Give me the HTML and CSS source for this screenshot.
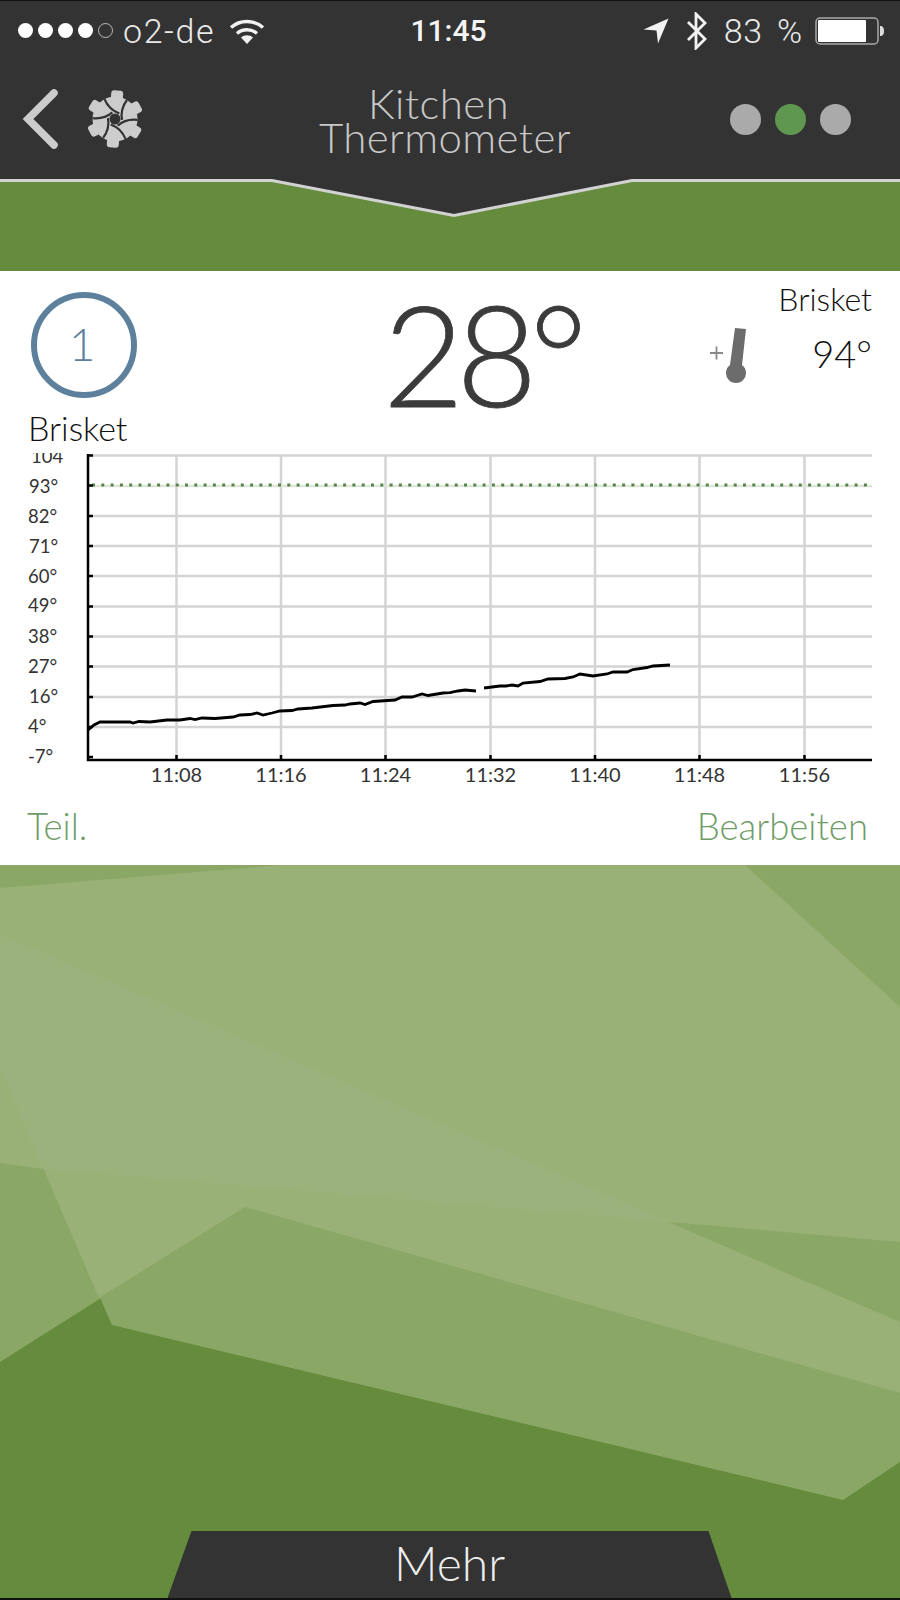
FILE: index.html
```html
<!DOCTYPE html>
<html>
<head>
  <meta charset="UTF-8">
  <title>Kitchen Thermometer</title>
  <link rel="stylesheet" href="styles.css">
</head>
<body>
  <div class="phone">
    <header class="header">
      <div class="status">
        <div class="status-left">
          <span class="signal"><i></i><i></i><i></i><i></i><i class="off"></i></span>
          <span class="carrier">o2-de</span>
          <svg class="wifi" width="36" height="26" viewBox="0 0 36 26">
            <path d="M2 9.5C11 1.5 25 1.5 34 9.5M8 15.5C13.5 10.5 22.500 10.500 28 15.500" fill="none" stroke="#f2f2f2" stroke-width="3.400"/>
            <path d="M12 19.500C15.500 16.500 20.500 16.500 24 19.500L18 26Z" fill="#f2f2f2"/>
          </svg>
        </div>
        <div class="clock">11:45</div>
        <div class="status-right">
          <svg class="arrow" width="26" height="26" viewBox="0 0 26 26"><path d="M25.500 0.500L0.500 11.500L13.500 12.500L15 25.500Z" fill="#f2f2f2"/></svg>
          <svg class="bt" width="24" height="38" viewBox="0 0 24 38"><path d="M3 10L20 27L11 36V2L20 11L3 28" fill="none" stroke="#f2f2f2" stroke-width="2.800"/></svg>
          <span class="battery-text">83 %</span>
          <svg class="battery" width="70" height="28" viewBox="0 0 70 28">
            <rect x="1" y="1" width="62" height="26" rx="4" fill="none" stroke="#aaa" stroke-width="1.500"/>
            <rect x="3" y="3" width="48" height="22" rx="1" fill="#fff"/>
            <path d="M65 9c3 0 4 2 4 5s-1 5-4 5z" fill="#ddd"/>
          </svg>
        </div>
      </div>
      <nav class="nav">
        <div class="nav-left">
          <svg class="back" width="38" height="60" viewBox="0 0 38 60"><path d="M34 4L8 30L34 56" fill="none" stroke="#ccc" stroke-width="7.500" stroke-linecap="round"/></svg>
          <svg class="gear" width="60" height="60" viewBox="0 0 60 60">
            <defs>
              <rect id="tooth" x="24" y="1.500" width="12" height="14" rx="3" fill="#ccc"/>
              <path id="slit" d="M35 25C29 22 24 16 22 9" fill="none" stroke="#333" stroke-width="2.200"/>
            </defs>
            <circle cx="30" cy="30" r="22.500" fill="#ccc"/>
            <use href="#tooth" transform="rotate(5 30 30)"/>
            <use href="#tooth" transform="rotate(62 30 30)"/>
            <use href="#tooth" transform="rotate(122 30 30)"/>
            <use href="#tooth" transform="rotate(185 30 30)"/>
            <use href="#tooth" transform="rotate(242 30 30)"/>
            <use href="#tooth" transform="rotate(302 30 30)"/>
            <use href="#slit" transform="rotate(-7 30 30)"/>
            <use href="#slit" transform="rotate(53 30 30)"/>
            <use href="#slit" transform="rotate(113 30 30)"/>
            <use href="#slit" transform="rotate(173 30 30)"/>
            <use href="#slit" transform="rotate(233 30 30)"/>
            <use href="#slit" transform="rotate(293 30 30)"/>
            <circle cx="30" cy="30" r="5.500" fill="#333"/>
          </svg>
        </div>
        <div class="title"><div class="title-top">Kitchen</div><div>Thermometer</div></div>
        <div class="pages"><i></i><i class="active"></i><i></i></div>
      </nav>
    </header>

    <svg class="notch" width="900" height="92" viewBox="0 0 900 92">
      <path d="M0 0H900V1L632 1L454 36L272 1L0 1Z" fill="#333"/>
      <path d="M0 1.500H272L454 36.500L632 1.500H900" fill="none" stroke="#d2d2d2" stroke-width="3"/>
    </svg>

    <section class="card">
      <div class="reading">
        <div class="probe">
          <div class="probe-num">1</div>
          <div class="probe-name">Brisket</div>
        </div>
        <div class="temp">28°</div>
        <div class="target">
          <div class="target-name">Brisket</div>
          <div class="target-row">
            <svg class="thermo" width="42" height="56" viewBox="0 0 42 56">
              <path d="M26 1L37 2L33 38A10 10 0 1 1 21 38Z" fill="#6c6c6c"/>
              <path d="M1 26H14M7.500 19.500V32.500" fill="none" stroke="#888" stroke-width="1.800"/>
            </svg>
            <div class="target-temp">94°</div>
          </div>
        </div>
      </div>

      <svg class="chart" width="900" height="337" viewBox="0 453 900 337">
        <path class="grid" d="M88 455.500H872M88 516H872M88 546H872M88 576H872M88 606.500H872M88 636.500H872M88 666.500H872M88 697H872M88 727H872M176.500 455V760M281 455V760M385.500 455V760M490.500 455V760M595 455V760M699.500 455V760M804.500 455V760"/>
        <path class="grid-soft" d="M88 486H872"/>
        <path class="limit" d="M92 485H872"/>
        <path class="axis" d="M88 454V760H872"/>
        <path class="ticks" d="M88 455.500H93M88 485.500H93M88 516H93M88 546H93M88 576H93M88 606.500H93M88 636.500H93M88 666.500H93M88 697H93M88 727H93M88 757H93M176.500 760V755M281 760V755M385.500 760V755M490.500 760V755M595 760V755M699.500 760V755M804.500 760V755"/>
        <path class="trace" d="M88 730L94 725L100 722L118 722L130 722L133 723L139 721.500L150 722L167 720L180 720L190 718.500L195 719.500L202 718L215 718.500L233 717L240 715L250 714.500L257 713L263 715L272 713L280 711L292 710.500L298 709L312 708L333 705.500L345 705L350 704L360 703L365 704.500L373 701.500L395 700L402 697L412 697L422 694L428 695.500L443 693L450 692.700L458 691L465 690L476 691M484 688L500 686L506 686L512 685L518 686L523 683L540 681.500L548 679L565 678.500L573 677L580 674L593 676L607 674L613 672L627 672L633 669.500L647 667.500L653 666L670 665"/>
        <g class="y-labels">
          <text x="31" y="463">104</text>
          <text x="29" y="493">93°</text>
          <text x="28" y="523">82°</text>
          <text x="29" y="553">71°</text>
          <text x="28" y="583">60°</text>
          <text x="28" y="612">49°</text>
          <text x="28" y="643">38°</text>
          <text x="28" y="673">27°</text>
          <text x="29" y="703">16°</text>
          <text x="28" y="733">4°</text>
          <text x="28" y="763">-7°</text>
        </g>
        <g class="x-labels">
          <text x="176.500" y="782">11:08</text>
          <text x="281" y="782">11:16</text>
          <text x="385.500" y="782">11:24</text>
          <text x="490.500" y="782">11:32</text>
          <text x="595" y="782">11:40</text>
          <text x="699.500" y="782">11:48</text>
          <text x="804.500" y="782">11:56</text>
        </g>
      </svg>

      <div class="actions">
        <span>Teil.</span>
        <span>Bearbeiten</span>
      </div>
    </section>

    <section class="field">
      <svg class="shards" width="900" height="735" viewBox="0 865 900 735">
        <rect x="0" y="865" width="900" height="735" fill="#658c3c"/>
        <polygon points="0,934 900,1322 900,1462 843,1500 112,1325 0,1068" fill="#8ba766"/>
        <polygon points="0,865 900,865 900,1393 245,1207 0,1362" fill="#8ba766"/>
        <polygon points="0,888 283,865 745,865 900,1007 900,1242 670,1222 43,1169 0,1163" fill="#99b077"/>
        <polygon points="0,934 900,1322 900,1393 245,1207 99,1298 0,1068" fill="#99b077"/>
        <polygon points="0,934 670,1222 43,1169 0,1068" fill="#9cb27c"/>
      </svg>
      <div class="more">Mehr</div>
    </section>
  </div>
</body>
</html>
```

FILE: styles.css
```css
* {
  box-sizing: border-box;
}
body {
  margin: 0;
  background: #000;
  font-family: "Lato", "Liberation Sans", sans-serif;
}
.phone {
  width: 900px;
  height: 1600px;
  display: flex;
  flex-direction: column;
  overflow: hidden;
  border-top: 1px solid #111;
  border-bottom: 2px solid #111;
  background: #658c3c;
}

/* header */
.header {
  height: 178px;
  flex: none;
  background: #333;
}
.status {
  height: 59px;
  display: grid;
  grid-template-columns: 1fr auto 1fr;
  align-items: center;
  padding: 0 15px 0 18px;
  font-family: "Roboto", "Liberation Sans", sans-serif;
  font-size: 30px;
  color: #e9e9e9;
}
.status-left, .status-right {
  display: flex;
  align-items: center;
}
.status-right {
  justify-content: flex-end;
}
.signal {
  display: flex;
  gap: 5px;
}
.signal i {
  width: 15px;
  height: 15px;
  border-radius: 50%;
  background: #fff;
}
.signal i.off {
  background: none;
  border: 1.500px solid #bbb;
}
.carrier {
  margin-left: 10px;
  font-size: 34px;
  font-weight: 300;
  letter-spacing: 1.6px;
}
.wifi {
  margin-left: 14px;
}
.clock {
  margin-right: 6px;
  font-weight: 500;
  color: #f4f4f4;
}
.battery-text {
  margin: 0 12px 0 15px;
  font-size: 34px;
  font-weight: 300;
  letter-spacing: 0.8px;
  word-spacing: 5px;
}
.bt {
  margin-left: 16px;
}

.nav {
  height: 118px;
  display: grid;
  grid-template-columns: 1fr auto 1fr;
  align-items: center;
}
.nav-left {
  display: flex;
  align-items: center;
  padding-left: 20px;
  gap: 27px;
}
.title {
  margin-right: 10px;
  font-size: 42px;
  font-weight: 300;
  letter-spacing: 0.4px;
  line-height: 34px;
  text-align: center;
  color: #c8c8c8;
  padding-top: 2px;
}
.title-top {
  margin-right: 13px;
}
.pages {
  display: flex;
  justify-content: flex-end;
  gap: 14px;
  padding-right: 49px;
}
.pages i {
  width: 31px;
  height: 31px;
  border-radius: 50%;
  background: #aaa;
}
.pages i.active {
  background: #5f9650;
}

.notch {
  display: block;
  flex: none;
  background: #658c3c;
}

/* card */
.card {
  height: 594px;
  flex: none;
  background: #fff;
}
.reading {
  height: 182px;
  display: grid;
  grid-template-columns: 383px 1fr 200px;
  padding-right: 28px;
}
.probe {
  padding: 21px 0 0 28px;
}
.probe-num {
  width: 106px;
  height: 106px;
  margin-left: 3px;
  padding-right: 4px;
  border: 6px solid #5d819d;
  border-radius: 50%;
  text-align: center;
  font-size: 46px;
  font-weight: 300;
  line-height: 92px;
  color: #5d819d;
}
.probe-name {
  margin-top: 10px;
  font-size: 34px;
  font-weight: 300;
  line-height: 40px;
  color: #111;
}
.temp {
  font-size: 140px;
  font-weight: 300;
  letter-spacing: -8px;
  line-height: 165px;
  color: #3b3b3b;
  -webkit-text-stroke: 0.8px #3b3b3b;
}
.target {
  text-align: right;
  font-weight: 300;
  color: #111;
}
.target-name {
  margin-top: 10px;
  font-size: 32px;
  line-height: 36px;
}
.target-row {
  display: flex;
  justify-content: space-between;
  align-items: flex-start;
  margin-top: 12px;
  padding-left: 37px;
}
.thermo {
  margin-top: -2px;
}
.target-temp {
  font-size: 38px;
  line-height: 48px;
}

/* chart */
.chart {
  display: block;
}
.grid, .grid-soft {
  fill: none;
  stroke: #d4d4d4;
  stroke-width: 2.500;
}
.grid-soft {
  stroke: #dfe5da;
}
.limit {
  fill: none;
  stroke: #578549;
  stroke-width: 3;
  stroke-dasharray: 3 6.300;
}
.axis, .ticks {
  fill: none;
  stroke: #000;
  stroke-width: 2.500;
}
.trace {
  fill: none;
  stroke: #000;
  stroke-width: 2.800;
}
.y-labels text, .x-labels text {
  font-size: 18.500px;
  font-weight: 400;
  fill: #333;
}
.x-labels text {
  font-size: 20px;
  text-anchor: middle;
}

.actions {
  height: 75px;
  display: flex;
  justify-content: space-between;
  padding: 14px 32px 0 27px;
  font-size: 36.500px;
  font-weight: 300;
  line-height: 44px;
  color: #6f9d68;
}

/* bottom */
.field {
  flex: 1;
  position: relative;
  display: flex;
  align-items: flex-end;
  justify-content: center;
}
.shards {
  position: absolute;
  top: 0;
  left: 0;
}
.more {
  position: relative;
  width: 564px;
  height: 67px;
  margin-left: -1px;
  clip-path: polygon(24px 0, 541px 0, 564px 100%, 0 100%);
  background: #333;
  text-align: center;
  font-size: 48px;
  font-weight: 300;
  line-height: 64px;
  color: #eee;
}
```
